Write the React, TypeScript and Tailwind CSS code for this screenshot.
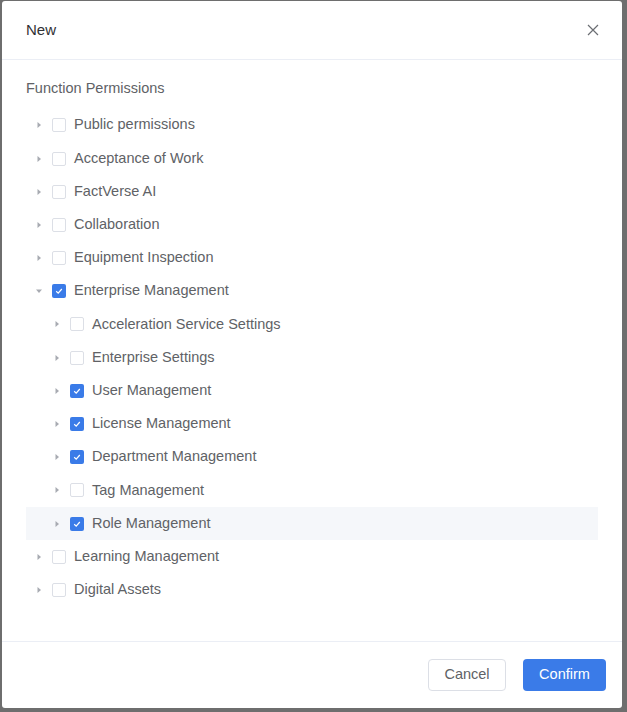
import React, { useState } from 'react';

interface PermNode {
  label: string;
  checked?: boolean;
  expanded?: boolean;
  highlight?: boolean;
  children?: PermNode[];
}

const tree: PermNode[] = [
  { label: 'Public permissions' },
  { label: 'Acceptance of Work' },
  { label: 'FactVerse AI' },
  { label: 'Collaboration' },
  { label: 'Equipment Inspection' },
  {
    label: 'Enterprise Management',
    checked: true,
    expanded: true,
    children: [
      { label: 'Acceleration Service Settings' },
      { label: 'Enterprise Settings' },
      { label: 'User Management', checked: true },
      { label: 'License Management', checked: true },
      { label: 'Department Management', checked: true },
      { label: 'Tag Management' },
      { label: 'Role Management', checked: true, highlight: true },
    ],
  },
  { label: 'Learning Management' },
  { label: 'Digital Assets' },
];

function Caret({ open }: { open?: boolean }) {
  return (
    <svg width="10" height="10" viewBox="0 0 10 10" className={open ? 'rotate-90' : ''}>
      <path d="M3.5 2 L7 5 L3.5 8 Z" fill="#a8abb2" />
    </svg>
  );
}

function Checkbox({ checked }: { checked?: boolean }) {
  if (checked) {
    return (
      <span className="flex h-[14px] w-[14px] items-center justify-center rounded-[2px] bg-[#3a7be8]">
        <svg width="10" height="10" viewBox="0 0 10 10">
          <path d="M2.2 5.2 L4.2 7.1 L7.8 3" fill="none" stroke="#fff" strokeWidth="1.2" />
        </svg>
      </span>
    );
  }
  return <span className="block h-[14px] w-[14px] rounded-[2px] border border-[#dcdfe6] bg-white" />;
}

function TreeRow({ node, level }: { node: PermNode; level: number }) {
  return (
    <>
      <div
        className={`flex h-[33.2px] items-center ${node.highlight ? 'bg-[#f5f7fa]' : ''}`}
        style={{ paddingLeft: 8 + level * 18 }}
      >
        <span className="flex w-[18px] items-center justify-start">
          <Caret open={node.expanded} />
        </span>
        <Checkbox checked={node.checked} />
        <span className="ml-[8px] text-[14.5px] text-[#606266]">{node.label}</span>
      </div>
      {node.expanded && node.children?.map((c) => <TreeRow key={c.label} node={c} level={level + 1} />)}
    </>
  );
}

export default function App() {
  const [open] = useState(true);
  return (
    <div
      className="h-[712px] w-[627px] bg-[#6e6e6e] pl-[2px] pt-[1px]"
      style={{ fontFamily: '"Liberation Sans", Arial, sans-serif' }}
    >
      {open && (
        <div className="flex h-[707px] w-[620px] flex-col rounded-[3px] bg-white">
          {/* Header */}
          <div className="flex h-[59px] items-center justify-between border-b border-[#ebeef5] pl-[24px] pr-[22px]">
            <span className="text-[15px] text-[#303133]">New</span>
            <svg width="14" height="14" viewBox="0 0 14 14">
              <path d="M2 2 L12 12 M12 2 L2 12" stroke="#6b6e73" strokeWidth="1.2" />
            </svg>
          </div>

          {/* Body */}
          <div className="flex-1 pl-[24px] pr-[24px] pt-[18px]">
            <div className="text-[14.5px] text-[#606266]">Function Permissions</div>
            <div className="mt-[9px]">
              {tree.map((n) => (
                <TreeRow key={n.label} node={n} level={0} />
              ))}
            </div>
          </div>

          {/* Footer */}
          <div className="flex h-[67px] items-center justify-end gap-[17px] border-t border-[#ebeef5] pr-[16px]">
            <button className="h-[32px] w-[78px] rounded-[4px] border border-[#dcdfe6] bg-white text-[14.5px] text-[#606266]">
              Cancel
            </button>
            <button className="h-[32px] w-[83px] rounded-[4px] bg-[#3a7be8] text-[14.5px] text-white">
              Confirm
            </button>
          </div>
        </div>
      )}
    </div>
  );
}
